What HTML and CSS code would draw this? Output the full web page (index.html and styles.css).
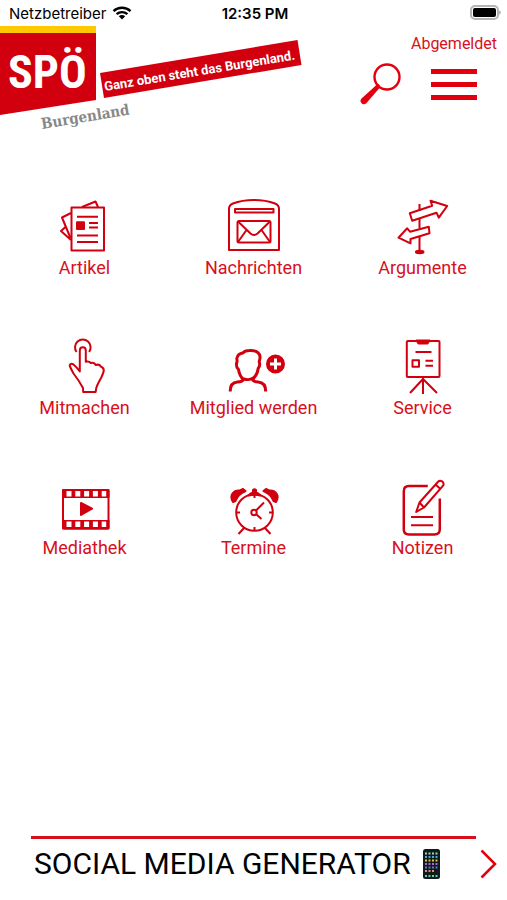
FILE: index.html
```html
<!DOCTYPE html>
<html lang="de">

<head>
    <meta charset="UTF-8">
    <meta name="viewport" content="width=device-width, initial-scale=1.0">
    <title>SPÖ Burgenland</title>
    <link rel="stylesheet" href="styles.css">
</head>

<body>
    <div class="statusBar">
        <span class="carrier">Netzbetreiber
            <svg class="wifi" width="20" height="14" viewBox="0 0 20 14">
                <path d="M1.5 5.2a12.3 12.3 0 0 1 17 0M4.6 8.2a8 8 0 0 1 10.8 0" fill="none" stroke="#000" stroke-width="2.4" />
                <path d="M6.8 10.3a4.6 4.6 0 0 1 6.4 0L10 13.6z" />
            </svg>
        </span>
        <span class="clock">12:35 PM</span>
        <svg class="battery" width="31" height="16" viewBox="0 0 31 16">
            <rect x="1" y="1" width="27" height="13" rx="4" fill="#fff" stroke="#b5b5b5" stroke-width="2" />
            <rect x="3" y="3" width="23" height="9" rx="2" />
            <path d="M29 5.500q2 .5 2 2t-2 2z" fill="#b5b5b5" />
        </svg>
    </div>

    <header class="header">
        <a href="#" class="logo" aria-label="SPÖ Burgenland">
            <svg width="304" height="110" viewBox="0 0 304 110">
                <path d="M0 0h96v74L0 89z" fill="#d2000f" />
                <path d="M0 0h96v7H0z" fill="#ffc800" />
                <text class="logoName" x="8" y="62">SPÖ</text>
                <path d="M100 47 297.500 14l4 25L104 72z" fill="#d2000f" />
                <text class="logoClaim" transform="translate(105 65) rotate(-9.4)">Ganz oben steht das Burgenland.</text>
                <text class="logoRegion" transform="translate(42 103) rotate(-9.4)">Burgenland</text>
            </svg>
        </a>
        <div class="account">
            <a href="#" class="loginState">Abgemeldet</a>
            <div class="tools">
                <button type="button" aria-label="Suche">
                    <svg width="42" height="42" viewBox="0 0 42 42">
                        <circle cx="27" cy="14" r="12.500" fill="none" stroke="#e2000f" stroke-width="2.400" />
                        <path d="M18 22.500 4.500 38" stroke="#e2000f" stroke-width="3" stroke-linecap="round" />
                        <path d="M16.500 22 1.500 35.500a3.400 3.400 0 0 0 4.800 4.800L19.500 25z" fill="#e2000f" />
                    </svg>
                </button>
                <button type="button" aria-label="Menü">
                    <span class="bars"></span>
                </button>
            </div>
        </div>
    </header>

    <main class="tiles">
        <a href="#" class="tile">
            <svg viewBox="-2 0 64 56">
                <path d="M16.500 9.500H49v43H16.500z" />
                <path d="M22 18.700h21M34 25h9M34 29.500h9M22 37.500h21M22 44h21" />
                <path d="M16 15 7 19.500 15.500 40M27 9l13.500-5.500L43 9M10.500 29 6 33l10 9" />
                <path class="solid" d="M22 24.300h7V31h-7z" />
            </svg>
            Artikel
        </a>
        <a href="#" class="tile">
            <svg viewBox="-2 0 64 56">
                <path d="M5 52V11q0-4 4-5.500Q18 2 30 2t21 3.500q4 1.500 4 5.500v41z" />
                <path d="M11 11h38.500v3.500H11z" />
                <rect x="13.500" y="23" width="33" height="21.500" rx="1.500" />
                <path d="m14 23.500 12.500 12q3.500 3 7 0l12.500-12M14 44l8.500-12M46 44l-8.500-12" />
            </svg>
            Nachrichten
        </a>
        <a href="#" class="tile">
            <svg viewBox="-2 0 64 56">
                <path d="M26.500 6v7M26.500 21v9.500M26.500 39v14" />
                <path d="m16.800 15.300 22.400-7.600-1.700-5L54.200 8l-8.400 11.700-2.300-5-24.300 8zM35.800 28.700 17 33.700l-2.800-3.400-8.700 9.400 12 5.600V41l19-5.700z" />
                <ellipse class="solid" cx="26.700" cy="54" rx="3.800" ry="1.200" />
            </svg>
            Argumente
        </a>
        <a href="#" class="tile">
            <svg viewBox="-2 0 64 56">
                <path d="M21.500 14a7.800 7.800 0 1 1 12.600 0" />
                <path d="M24.800 33.500V12.700q0-3.400 3-3.400t3 3.400v11q3-1 5 1.300 3.500-1 5 2 3.500-1.200 5 1.500 3 1.300 3 4-.5 3-2.500 7-4.500 8-5 10.500l-.7 4H28.200l-.2-4q-4-7.500-9.500-14.500Q15 29 14.700 27.500q.5-2.500 3.500-1.300 3 2.300 6.600 7.300z" />
            </svg>
            Mitmachen
        </a>
        <a href="#" class="tile">
            <svg class="bold" viewBox="-2 0 64 56">
                <path d="M6.200 53.500q0-9 7-9.500 5.500 0 6.500-3l2.500.5q2.800.5 6-1 1 3.500 6 3.500 7.500.5 7.500 9.500" />
                <path d="M19.500 41.500q-4-3.500-5-10-2.500-2-2-6 1-2 .3-5 1-5 6-5.500 2-2.500 6.500-2.500 6.700-.3 9 2.500 3 2.500.9 8.500 1.300 4-1 7-1 7.500-6.500 11" />
                <circle class="solid" cx="51.500" cy="26" r="8" />
                <path d="M51.500 20.500v11M46 26h11" stroke="#fff" />
            </svg>
            Mitglied werden
        </a>
        <a href="#" class="tile">
            <svg viewBox="-2 0 64 56">
                <rect x="13.800" y="3" width="32.700" height="36" rx="1" />
                <path d="M22.500 14h16M19.500 22.300H26v6.500h-6.500zM32.500 22.700H40M32.500 27.700H40" />
                <path d="M30 39v17M17 55l13-14 14 14" />
                <path class="solid" d="M23.500 2.500h13l-2 3h-9z" />
            </svg>
            Service
        </a>
        <a href="#" class="tile">
            <svg viewBox="-2 0 64 56">
                <rect x="8" y="12" width="45.500" height="38.500" rx="1" />
                <path class="solid" d="M8 12h45.500v7H8zM8 43h45.500v7.500H8z" />
                <path d="m26 25 11 5.700L26 37z" class="solid" />
                <path class="hole" d="M11.500 13h5v5.500h-5zM20.300 13h5v5.500h-5zM29.100 13h5v5.500h-5zM37.900 13h5v5.500h-5zM46.700 13h4.500v5.500h-4.500zM11.500 43.500h5V49h-5zM20.300 43.500h5V49h-5zM29.100 43.500h5V49h-5zM37.900 43.500h5V49h-5zM46.700 43.500h4.500V49h-4.500z" />
            </svg>
            Mediathek
        </a>
        <a href="#" class="tile">
            <svg viewBox="-2 0 64 56">
                <circle cx="30.500" cy="34.500" r="18.300" />
                <path d="M30.500 16.500V20M30.500 49v3.500M12.500 34.500H16M45 34.500h3.500M20 50l-5.500 6M41 50l5.500 6" />
                <circle cx="30" cy="34.500" r="2.700" />
                <path d="m32 32.500 8-8M32.500 36.500l5 4.500" />
                <path class="solid" d="M9 24q-3-5-.5-8.500Q11 12 16 12.500l3-1.500 2.500 2Q14 16 11.500 23zM52 24q3-5 .5-8.500-2.500-3.500-7.500-3l-3-1.500-2.500 2Q47 16 49.500 23zM24.500 17.500Q27 15 29 14.500V12q1.500-1.500 3 0v2.500q2 .5 4.500 3-6-1.500-12 0z" />
            </svg>
            Termine
        </a>
        <a href="#" class="tile">
            <svg viewBox="-2 0 64 56">
                <path class="thick" d="M34.800 8H16q-5.200 0-5.200 5.200v38.300q0 5 5.200 5h25.500q5.300 0 5.300-5.200V20.500" />
                <path d="M18 39h22M18 47.300h22" />
                <path d="m23.200 34 3.300-9.500L45.300 3.500q1.500-1.500 3.700-.2 2.300 1.700 1.300 4L31 29.500zM42.500 6.500l5 4.500M26.500 24.500l4.500 5" />
            </svg>
            Notizen
        </a>
    </main>

    <footer class="footer">
        <a href="#" class="generator">
            <span class="generatorTitle">SOCIAL MEDIA GENERATOR</span>
            <svg class="phone" width="17" height="30" viewBox="0 0 17 30">
                <rect width="17" height="30" rx="2.500" fill="#111a1b" />
                <g fill="none" stroke-width="2" stroke-dasharray="2 1.500">
                    <path d="M2 4.500h13" stroke="#9fd8b0" />
                    <path d="M2 8h13" stroke="#4fa8d8" />
                    <path d="M2 11.500h13" stroke="#e2c04c" />
                    <path d="M2 15h13" stroke="#b565d0" />
                    <path d="M2 18.500h13" stroke="#4a7fe0" />
                    <path d="M2 22h9" stroke="#e88c6a" />
                    <path d="M2 27h13" stroke="#67c8b4" />
                </g>
            </svg>
            <svg class="chevron" width="17" height="30" viewBox="0 0 17 30">
                <path d="m1.500 1.500 13.500 13.500-13.500 13.500" fill="none" stroke="#e2000f" stroke-width="2.500" />
            </svg>
        </a>
    </footer>
</body>

</html>
```

FILE: styles.css
```css
:root {
    --red: #d8101c;
    --iconRed: #d2000f;
}

* {
    box-sizing: border-box;
}

body {
    margin: 0;
    min-height: 100vh;
    display: flex;
    flex-direction: column;
    background: #fff;
    color: #000;
    font-family: Roboto, "Liberation Sans", sans-serif;
}

a {
    color: inherit;
    text-decoration: none;
}

button {
    padding: 0;
    border: none;
    background: none;
    cursor: pointer;
}

svg {
    display: block;
    overflow: visible;
}

.statusBar {
    display: grid;
    grid-template-columns: 1fr auto 1fr;
    align-items: center;
    height: 26px;
    padding: 0 6px 0 9px;
    font-family: Inter, sans-serif;
    font-size: 14px;
}

.carrier {
    display: flex;
    align-items: center;
    gap: 6px;
    font-size: 15px;
}

.clock {
    font-size: 15px;
    font-weight: 600;
}

.battery {
    justify-self: end;
}

.header {
    display: flex;
    justify-content: space-between;
}

.logoName {
    font: bold 46px "Liberation Sans Narrow", "Roboto Condensed", "Open Sans Condensed", sans-serif;
    fill: #fff;
}

.logoClaim {
    font: bold 13px Roboto, sans-serif;
    fill: #fff;
}

.logoRegion {
    font: bold 15px "DejaVu Serif Condensed", "DejaVu Serif", serif;
    fill: #888;
}

.account {
    padding: 8px 10px 0 0;
    color: var(--red);
    font-size: 16px;
    line-height: 20px;
    text-align: right;
}

.tools {
    display: flex;
    align-items: center;
    gap: 29px;
    margin-top: 9px;
    padding-right: 20px;
}

.bars {
    display: block;
    width: 46px;
    height: 31px;
    border-top: 5px solid #e2000f;
    border-bottom: 5px solid #e2000f;
    background: linear-gradient(#e2000f, #e2000f) center / 100% 5px no-repeat;
}

.tiles {
    display: grid;
    grid-template-columns: repeat(3, 1fr);
    row-gap: 60px;
    margin-top: 62px;
}

.tile {
    display: flex;
    flex-direction: column;
    align-items: center;
    gap: 4px;
    color: var(--red);
    font-size: 18px;
    line-height: 20px;
}

.tile svg {
    width: 64px;
    height: 56px;
    fill: none;
    stroke: var(--iconRed);
    stroke-width: 2;
    stroke-linejoin: round;
}

.tile .bold {
    stroke-width: 3;
}

.tile .thick {
    stroke-width: 2.5;
}

.tile .solid {
    fill: var(--iconRed);
}

.tile .hole {
    fill: #fff;
    stroke: none;
}

.footer {
    margin-top: auto;
    padding: 0 10px 18px 31px;
}

.generator {
    display: flex;
    align-items: center;
    font-size: 30px;
    line-height: 36px;
}

.footer::before {
    content: "";
    display: block;
    height: 3px;
    margin: 0 21px 7px 0;
    background: var(--red);
}

.generatorTitle {
    padding-left: 3px;
}

.phone {
    margin-left: 12px;
}

.chevron {
    margin-left: auto;
}
```
